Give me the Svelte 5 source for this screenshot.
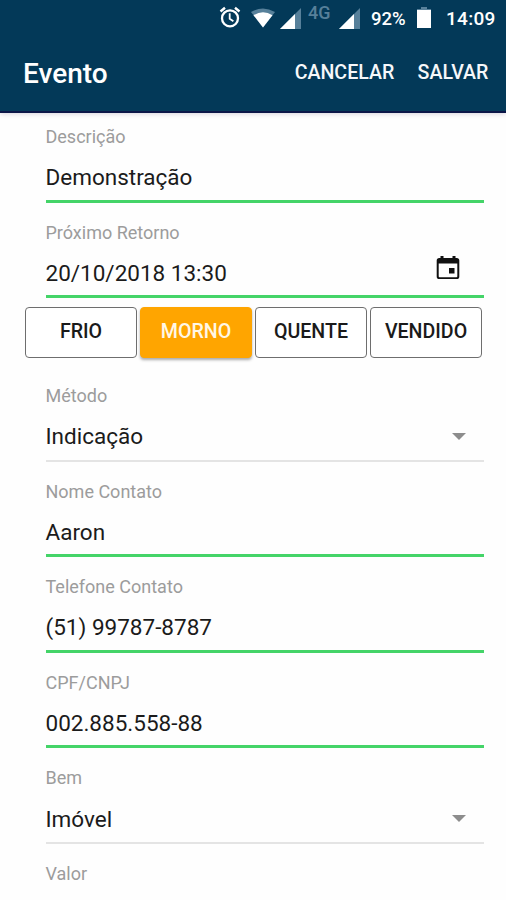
<script>
  const first = [
    { label: 'Descrição', value: 'Demonstração' },
    { label: 'Próximo Retorno', value: '20/10/2018 13:30', icon: 'calendar' }
  ];
  const stages = ['FRIO', 'MORNO', 'QUENTE', 'VENDIDO'];
  const rest = [
    { label: 'Método', value: 'Indicação', select: true },
    { label: 'Nome Contato', value: 'Aaron' },
    { label: 'Telefone Contato', value: '(51) 99787-8787' },
    { label: 'CPF/CNPJ', value: '002.885.558-88' },
    { label: 'Bem', value: 'Imóvel', select: true }
  ];
  let active = $state('MORNO');
</script>

{#snippet field(f)}
  <div class="field" class:select={f.select}>
    <div class="label">{f.label}</div>
    <div class="value">
      <span>{f.value}</span>
      {#if f.icon}
        <svg class="calendar" viewBox="0 0 24 25" width="24" height="25">
          <path d="M4.5 1h3v2h9V1h3v2h1.2A2.6 2.6 0 0 1 23.3 5.6V21.4A2.6 2.6 0 0 1 20.7 24H3.3A2.6 2.6 0 0 1 .7 21.4V5.6A2.6 2.6 0 0 1 3.3 3h1.2zM2.7 8.5V21.3q0 .9.9.9H20.4q.9 0 .9-.9V8.5z" fill="#111" fill-rule="evenodd" />
          <rect x="13" y="13" width="5.5" height="5.5" fill="#111" />
        </svg>
      {/if}
      {#if f.select}
        <svg class="arrow" viewBox="0 0 14 7" width="14" height="7"><path d="M0 0h14L7 7z" fill="#8d8d8d" /></svg>
      {/if}
    </div>
  </div>
{/snippet}

<main>
  <header>
    <div class="status">
      <svg class="alarm" viewBox="0 0 22 22" width="22" height="22" fill="none" stroke="#fff">
        <circle cx="11" cy="12.3" r="8" stroke-width="2.3" />
        <path d="M10.7 7.300v5.500l3.700 2.500" stroke-width="1.8" />
        <path d="M1.5 5.500 6 1.800M20.500 5.500 16 1.800" stroke-width="2.4" />
      </svg>
      <svg class="wifi" viewBox="0 0 26 20" width="26" height="20">
        <path d="M1 4Q13-3 25 4L13 19.500z" fill="#57809a" />
        <path d="M3.500 7.200Q13 1.500 22.500 7.200L13 19.500z" fill="#fff" />
      </svg>
      <svg class="signal" viewBox="0 0 21 21" width="21" height="21">
        <path d="M0 21 21 0V21z" fill="#57809a" /><path d="M0 21 15 6V21z" fill="#fff" />
      </svg>
      <span class="network">4G</span>
      <svg class="signal two" viewBox="0 0 21 21" width="21" height="21">
        <path d="M0 21 21 0V21z" fill="#57809a" /><path d="M0 21 15 6V21z" fill="#fff" />
      </svg>
      <span class="percent">92%</span>
      <svg class="battery" viewBox="0 0 14 21" width="14" height="21">
        <path d="M4 0h6v2h4v3H0V2h4z" fill="#57809a" /><path d="M0 3h14v18H0z" fill="#fff" />
      </svg>
      <span class="time">14:09</span>
    </div>
    <div class="toolbar">
      <h1>Evento</h1>
      <button class="cancel">CANCELAR</button>
      <button class="save">SALVAR</button>
    </div>
  </header>

  <form>
    {#each first as f}{@render field(f)}{/each}
    <div class="stages">
      {#each stages as s}
        <button type="button" class:active={active === s} onclick={() => (active = s)}>{s}</button>
      {/each}
    </div>
    {#each rest as f}{@render field(f)}{/each}
    <div class="field last"><div class="label">Valor</div></div>
  </form>
</main>

<style>
  :global(body) { margin: 0; background: #fff; }
  main { width: 506px; height: 900px; overflow: hidden; background: #fefefe; font-family: Roboto, "Noto Sans", sans-serif; }
  header { height: 113px; box-sizing: border-box; background: #033958; color: #fff; border-bottom: 2px solid #0b1648; box-shadow: 0 1px 5px #9b8da866; }
  .status { display: flex; height: 37px; align-items: flex-start; justify-content: flex-end; padding-right: 11px; font-weight: 500; font-size: 18.5px; line-height: 22px; }
  .status svg { flex: none; }
  .alarm { margin: 6px 9px 0 0; }
  .wifi { margin: 8px 4px 0 0; }
  .signal { margin: 8px 7px 0 0; }
  .network { width: 23px; margin: 2px 8px 0 0; color: #57809a; font-size: 18px; }
  .two { margin-right: 11px; }
  .percent { width: 37px; margin: 8px 9px 0 0; }
  .battery { margin: 7px 15px 0 0; }
  .time { width: 49px; margin-top: 8px; font-size: 19px; letter-spacing: .3px; }
  .toolbar { display: flex; height: 74px; align-items: center; padding: 0 17px 0 23px; box-sizing: border-box; }
  h1 { flex: 1; margin: 0; font-size: 28px; line-height: 32px; font-weight: 500; }
  button { font-family: inherit; cursor: pointer; }
  .toolbar button { padding: 0; margin-top: -2px; border: 0; background: none; color: #f6f8fa; font-size: 19.6px; font-weight: 500; line-height: 24px; white-space: nowrap; }
  .cancel { width: 101px; margin-right: 22px; }
  .save { width: 72px; }
  form { padding-top: 12px; }
  .field { box-sizing: border-box; height: 95.6px; margin: 0 22px 0 46px; padding-top: 18px; border-bottom: 3px solid #44d468; }
  .field:first-child { height: 77.8px; padding-top: 0; }
  .field.select { border-bottom: 2px solid #e4e4e4; }
  .field.last { border: 0; }
  .label { margin-left: -.5px; color: #9c9c9c; font-size: 18px; line-height: 24px; }
  .value { display: flex; align-items: center; justify-content: space-between; height: 28px; margin: 14.3px 0 0 -.5px; color: #1b1b1b; font-size: 22.5px; line-height: 28px; }
  .calendar { margin: -12px 24px 0 0; }
  .arrow { margin: 0 18px 0 0; }
  .stages { display: flex; gap: 3px; height: 67.6px; box-sizing: border-box; padding: 9px 24px 8px 25px; }
  .stages button { flex: 1; min-width: 0; height: 51px; box-sizing: border-box; padding: 0 0 2px; border: 1px solid #6e6e6e; border-radius: 4px; background: #fff; color: #1a1a1a; font-size: 19.6px; font-weight: 500; }
  .stages button.active { background: #ffa500; border-color: #ffa500; color: #fff7e6; box-shadow: 0 2px 3px #0005; }
</style>
